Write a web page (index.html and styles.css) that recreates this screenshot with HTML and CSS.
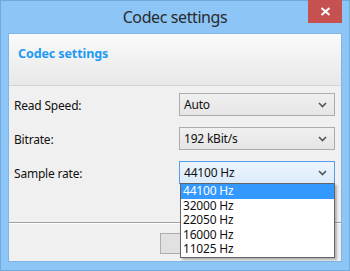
FILE: index.html
```html
<!DOCTYPE html>
<html>
<head>
<meta charset="utf-8">
<link rel="stylesheet" href="styles.css">
</head>
<body>
<div class="window">
  <div class="titlebar">
    <div class="title">Codec settings</div>
    <div class="close">
      <svg width="11" height="9" viewBox="0 0 11 9"><path d="M1.5 1 L9.5 8 M9.5 1 L1.5 8" stroke="#fff" stroke-width="2" fill="none"/></svg>
    </div>
  </div>
  <div class="client">
    <div class="header"><span class="header-text">Codec settings</span></div>
    <div class="body">
      <div class="row">
        <span class="label">Read Speed:</span>
        <div class="combo"><span>Auto</span><svg class="chev" width="9" height="6" viewBox="0 0 9 6"><path d="M1 1 L4.5 4.5 L8 1" stroke="#555" stroke-width="1.6" fill="none"/></svg></div>
      </div>
      <div class="row">
        <span class="label">Bitrate:</span>
        <div class="combo"><span>192 kBit/s</span><svg class="chev" width="9" height="6" viewBox="0 0 9 6"><path d="M1 1 L4.5 4.5 L8 1" stroke="#555" stroke-width="1.6" fill="none"/></svg></div>
      </div>
      <div class="row">
        <span class="label">Sample rate:</span>
        <div class="combo focused"><span>44100 Hz</span><svg class="chev" width="9" height="6" viewBox="0 0 9 6"><path d="M1 1 L4.5 4.5 L8 1" stroke="#555" stroke-width="1.6" fill="none"/></svg>
          <ul class="list">
            <li class="sel">44100 Hz</li>
            <li>32000 Hz</li>
            <li>22050 Hz</li>
            <li>16000 Hz</li>
            <li>11025 Hz</li>
          </ul>
        </div>
      </div>
    </div>
    <div class="footer">
      <div class="button"></div>
    </div>
  </div>
</div>
</body>
</html>
```
FILE: styles.css
```css
* { box-sizing: border-box; }
html, body { margin: 0; padding: 0; }
body { width: 350px; height: 271px; overflow: hidden; font-family: "Noto Sans", "Open Sans", sans-serif; }
.window {
  width: 350px; height: 271px;
  background: #8cc5f6;
  border: 1px solid #6fa9de;
  display: flex; flex-direction: column;
  padding: 0 7px 8px 7px;
}
.titlebar {
  height: 32px; flex: none;
  display: flex; align-items: center; justify-content: center;
  position: relative;
}
.title { font-size: 16px; color: #2b2b2b; margin-top: -1px; letter-spacing: -0.4px; }
.close {
  position: absolute; right: 0; top: -1px;
  width: 34px; height: 23px; background: #c75050;
  display: flex; align-items: center; justify-content: center;
}
.client {
  flex: 1; display: flex; flex-direction: column;
  border: 1px solid #7fb4e6;
  background: #f0f0f0;
}
.header {
  height: 52px; flex: none;
  background: linear-gradient(#fafafa, #e8e8e8);
  border-bottom: 1px solid #d5d5d5;
  padding: 7px 0 0 9px;
}
.header-text { font-weight: bold; font-size: 12.5px; color: #1d9af4; letter-spacing: -0.1px; }
.body {
  flex: 1; display: flex; flex-direction: column; gap: 11px;
  padding: 7px 6px 0 5px;
  border-bottom: 1px solid #a0a0a0;
}
.row { display: flex; align-items: center; justify-content: space-between; height: 23px; }
.label { font-size: 12px; color: #111; letter-spacing: -0.2px; margin-top: 1px; }
.combo {
  position: relative;
  width: 156px; height: 23px;
  border: 1px solid #acacac;
  background: linear-gradient(#f0f0f0, #e5e5e5);
  display: flex; align-items: center; justify-content: space-between;
  padding: 0 7px 0 4px;
  font-size: 12px; color: #111; letter-spacing: -0.2px;
}
.combo.focused {
  border-color: #569de5;
  background: linear-gradient(#ecf4fc, #dcecfc);
}
.chev { margin-top: 1px; }
.list {
  position: absolute; left: 0; top: 21px;
  width: 155px;
  margin: 0; padding: 0; list-style: none;
  background: #fff; border: 1px solid #646464;
  box-shadow: 2px 2px 2px rgba(0,0,0,0.25);
  z-index: 5;
}
.list li { height: 14.6px; line-height: 14.6px; padding-left: 2px; font-size: 12px; color: #111; }
.list li.sel { background: #3399ff; color: #fff; }
.footer {
  height: 38px; flex: none;
  border-top: 1px solid #fff;
  padding: 9px 0 0 151px;
}
.button {
  width: 75px; height: 21px;
  border: 1px solid #adadad; background: #e1e1e1;
}
```
